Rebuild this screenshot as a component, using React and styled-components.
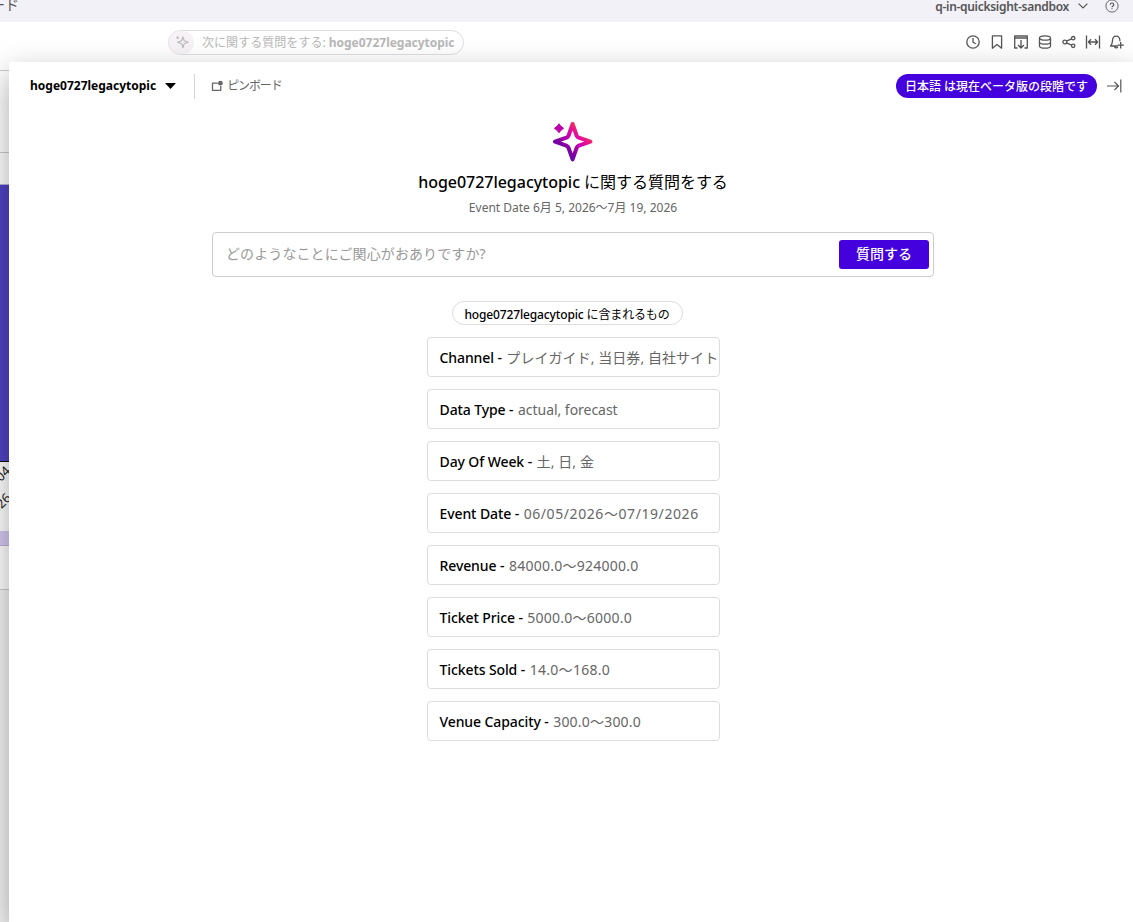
import styled, { createGlobalStyle } from "styled-components";

const GlobalStyle = createGlobalStyle`
  * {
    box-sizing: border-box;
  }

  body {
    margin: 0;
    overflow: hidden;
    font-family: "Noto Sans", "Noto Sans CJK JP", sans-serif;
    font-size: 12px;
    color: #000;
  }
`;

const Page = styled.div`
  position: relative;
  display: flex;
  flex-direction: column;
  height: 922px;
  overflow: hidden;
  background: #fff;
`;

const NavBar = styled.header`
  position: relative;
  z-index: 3;
  display: flex;
  flex: none;
  justify-content: space-between;
  height: 22px;
  padding-right: 14px;
  background: #f2f1f7;
  color: #545b64;
`;

const Crumb = styled.span`
  margin: -6px 0 0 -9px;
  font-size: 14px;
  line-height: 22px;
  color: #555;
`;

const Account = styled.div`
  display: flex;
  align-items: center;
  height: 12px;
  font-weight: 600;
  letter-spacing: -0.3px;
  color: #555;

  svg {
    margin-left: 9px;
  }

  svg + svg {
    margin-left: 17px;
  }
`;

const Toolbar = styled.div`
  display: flex;
  flex: none;
  align-items: center;
  justify-content: space-between;
  height: 40px;
  padding: 0 8px 0 168px;
`;

const AskPill = styled.div`
  display: flex;
  align-items: center;
  width: 296px;
  height: 25px;
  border: 1px solid #dedede;
  border-radius: 13px;
  color: #b8b8b8;
  letter-spacing: 0.05px;

  b {
    margin-left: 3px;
    font-weight: 700;
    letter-spacing: -0.02px;
  }
`;

const AskIcon = styled.span`
  display: flex;
  align-items: center;
  justify-content: center;
  width: 25px;
  height: 23px;
  margin-right: 8px;
  border-radius: 12px;
  background: #f6f2f6;
`;

const Tools = styled.div`
  display: flex;
  gap: 8px;
  color: #555;
`;

const Sheet = styled.div`
  display: flex;
  flex: 1;
  flex-direction: column;
  background: #f4f4f4;
`;

const Band = styled.div`
  flex: none;
  height: ${(p) => p.$h}px;
  border-bottom: 1px solid ${(p) => p.$line || "transparent"};
  background: ${(p) => p.$bg || "#fff"};
`;

const Ticks = styled(Band)`
  position: relative;
`;

const Tick = styled.span`
  position: absolute;
  right: ${(p) => p.$right}px;
  top: ${(p) => p.$top}px;
  font-size: 13px;
  line-height: 13px;
  color: #222;
  transform: rotate(-45deg);
  transform-origin: right center;
`;

const ChartColumn = styled.div`
  display: flex;
  flex-direction: column;
  width: 40px;
`;

const Panel = styled.main`
  position: absolute;
  z-index: 2;
  top: 62px;
  left: 9px;
  right: 0;
  bottom: 0;
  display: flex;
  flex-direction: column;
  background: #fff;
  box-shadow: 0 12px 30px rgba(0, 0, 0, 0.35);
`;

const PanelHeader = styled.div`
  display: flex;
  align-items: center;
  height: 48px;
  padding: 0 11px 0 21px;
`;

const TopicName = styled.div`
  display: flex;
  align-items: center;
  gap: 9px;
  padding-right: 18px;
  font-weight: 700;
  line-height: 16px;
`;

const Divider = styled.div`
  width: 1px;
  height: 25px;
  background: #d5d5d5;
`;

const Pinboard = styled.div`
  display: flex;
  flex: 1;
  align-items: center;
  gap: 4px;
  padding-left: 16px;
  font-size: 12px;
  line-height: 16px;
  letter-spacing: -1.1px;
  color: #666;
`;

const Beta = styled.div`
  height: 24px;
  margin-right: 10px;
  padding: 0 9px;
  border-radius: 12px;
  background: #4400dd;
  color: #fff;
  font-weight: 500;
  line-height: 25px;
  white-space: nowrap;
`;

const Content = styled.div`
  display: flex;
  flex-direction: column;
  align-items: center;
  padding: 12px 0 0 4px;
`;

const Title = styled.h1`
  margin: 8px 0 0;
  font-size: 16px;
  font-weight: 500;
  line-height: 24px;
  letter-spacing: -0.03px;
`;

const Regular = styled.span`
  font-weight: 400;
`;

const DateRange = styled.div`
  margin-top: 5px;
  line-height: 18px;
  color: #666;
`;

const Question = styled.div`
  display: flex;
  align-items: center;
  justify-content: space-between;
  width: 722px;
  height: 45px;
  margin-top: 15px;
  padding: 0 4px 0 13px;
  border: 1px solid #ccc;
  border-radius: 4px;
  font-size: 14px;
  letter-spacing: 0.1px;
  color: #999;
`;

const Placeholder = styled.span`
  margin-bottom: 3px;
`;

const AskButton = styled.button`
  width: 90px;
  height: 29px;
  padding: 0 0 4px;
  border: 0;
  border-radius: 3px;
  background: #4400dd;
  color: #fff;
  font: inherit;
  font-weight: 500;
`;

const Chip = styled.div`
  width: 231px;
  height: 24px;
  margin: 24px 12px 0 0;
  border: 1px solid #ddd;
  border-radius: 12px;
  font-weight: 500;
  line-height: 25px;
  letter-spacing: -0.14px;
  text-align: center;
`;

const FieldList = styled.div`
  display: grid;
  gap: 12px;
  width: 293px;
  margin-top: 12px;
`;

const Field = styled.div`
  height: 40px;
  padding: 0 0 0 12px;
  border: 1px solid #ddd;
  border-radius: 4px;
  overflow: hidden;
  color: #666;
  font-size: 14px;
  line-height: 40px;
  letter-spacing: ${(p) => p.$spacing || 0}px;
  white-space: nowrap;

  b {
    margin-right: 1px;
    color: #000;
    font-weight: 500;
    letter-spacing: -0.1px;
  }
`;

const fields = [
  { name: "Channel", values: "プレイガイド, 当日券, 自社サイト", spacing: 0.06 },
  { name: "Data Type", values: "actual, forecast", spacing: -0.04 },
  { name: "Day Of Week", values: "土, 日, 金", spacing: 0.1 },
  { name: "Event Date", values: "06/05/2026〜07/19/2026", spacing: 0.58 },
  { name: "Revenue", values: "84000.0〜924000.0", spacing: 0.25 },
  { name: "Ticket Price", values: "5000.0〜6000.0", spacing: 0.24 },
  { name: "Tickets Sold", values: "14.0〜168.0", spacing: 0.28 },
  { name: "Venue Capacity", values: "300.0〜300.0", spacing: 0.2 },
];

function Icon({ size = 16, children }) {
  return (
    <svg
      width={size}
      height={size}
      viewBox="0 0 16 16"
      fill="none"
      stroke="currentColor"
      strokeWidth="1.3"
      strokeLinejoin="round"
    >
      {children}
    </svg>
  );
}

function Sparkle() {
  return (
    <svg width="40" height="40" viewBox="0 0 40 40">
      <defs>
        <linearGradient id="spark" gradientUnits="userSpaceOnUse" x1="8" y1="35" x2="32" y2="8">
          <stop offset="0" stopColor="#5b12b8" />
          <stop offset="0.28" stopColor="#7c00a0" />
          <stop offset="0.65" stopColor="#dc00b4" />
          <stop offset="1" stopColor="#f83a4c" />
        </linearGradient>
      </defs>
      <path
        d="M19.6 2 L23.6 13.5 Q24.2 15 25.8 15.7 L37.4 19.6 L25.8 23.7 Q24.2 24.4 23.6 26 L19.6 37.4 L15.6 26 Q15 24.4 13.4 23.7 L2 19.6 L13.4 15.7 Q15 15 15.6 13.5 Z"
        fill="none"
        stroke="url(#spark)"
        strokeWidth="4"
        strokeLinejoin="round"
      />
      <path d="M6 1.8 L7.9 4.3 L10.6 6.3 L7.9 8.3 L6 10.8 L4.1 8.3 L1.4 6.3 L4.1 4.3 Z" fill="#bb00aa" stroke="#bb00aa" strokeLinejoin="round" />
    </svg>
  );
}

function App() {
  return (
    <Page>
      <GlobalStyle />
      <NavBar>
        <Crumb>ード</Crumb>
        <Account>
          q-in-quicksight-sandbox
          <svg width="10" height="6" viewBox="0 0 10 6" fill="none" stroke="currentColor" strokeWidth="1.2">
            <path d="M.6 .6 5 5 9.4 .6" />
          </svg>
          <Icon size={14}>
            <circle cx="8" cy="8" r="7" strokeWidth="1" />
            <path d="M6 6.5c0-2.6 4-2.6 4 0 0 1.5-2 1.4-2 3M8 10.5v1.3" />
          </Icon>
        </Account>
      </NavBar>

      <Toolbar>
        <AskPill>
          <AskIcon>
            <Icon size={14}>
              <path d="M9 2.2 10.5 6.5 15 8.2 10.5 9.9 9 14.4 7.5 9.9 3 8.2 7.5 6.5Z" />
              <path d="M3 1.2 4.6 3 3 4.8 1.4 3Z" fill="currentColor" stroke="none" />
            </Icon>
          </AskIcon>
          次に関する質問をする:<b>hoge0727legacytopic</b>
        </AskPill>
        <Tools>
          <Icon>
            <circle cx="8" cy="8" r="6.2" />
            <path d="M8 4v4.3l2.8 1.5" />
          </Icon>
          <Icon>
            <path d="M3.4 1.8h9.2v12.4L8 10.6l-4.6 3.6Z" />
          </Icon>
          <Icon>
            <path d="M4.5 14H1.7V2h12.6v12h-2.8M1.7 4h12.6M8 6v8M5 11l3 3 3-3" />
          </Icon>
          <Icon>
            <ellipse cx="8" cy="4" rx="5.5" ry="2.2" />
            <path d="M2.5 4v8c0 2.9 11 2.9 11 0V4M2.5 8c0 2.9 11 2.9 11 0" />
          </Icon>
          <Icon>
            <circle cx="3.8" cy="8" r="1.9" />
            <circle cx="12.2" cy="4.2" r="1.7" />
            <circle cx="12.2" cy="11.8" r="1.7" />
            <path d="m5.5 7.2 5.2-2.3M5.5 8.8l5.2 2.3" />
          </Icon>
          <Icon>
            <path d="M1.5 1.5v13M14.5 1.5v13M3.5 8h9M6 5.2 3.4 8 6 10.8M10 5.2 12.6 8 10 10.8" />
          </Icon>
          <Icon>
            <path d="M8.5 12H1.6c1.2-1.4 1.7-2.7 1.8-4.8C3.6.4 10.8.4 11 7.2M5.5 12.2c0 2.2 3.2 2.2 3.2.2M11.7 8v6.4M8.6 11.2h6.3" />
          </Icon>
        </Tools>
      </Toolbar>

      <Sheet>
        <ChartColumn>
          <Band $h={9} $line="#ccc" />
          <Band $h={82} $line="#ccc" />
          <Band $h={32} $line="#b9b2dc" />
          <Band $h={277} $bg="#5043c4" $line="#111" />
          <Ticks $h={69}>
            <Tick $right={32} $top={0}>2026/06/04</Tick>
            <Tick $right={31} $top={27}>2026</Tick>
          </Ticks>
          <Band $h={15} $bg="#d6c8f2" $line="#bbb0d4" />
          <Band $h={44} $line="#ccc" />
        </ChartColumn>
      </Sheet>

      <Panel>
        <PanelHeader>
          <TopicName>
            hoge0727legacytopic
            <svg width="11" height="6" viewBox="0 0 11 6">
              <path d="M0 0h11L5.5 6Z" />
            </svg>
          </TopicName>
          <Divider />
          <Pinboard>
            <Icon size={12}>
              <path d="M9 4.2H2v9.6h11V8" strokeWidth="1.7" />
              <circle cx="12.5" cy="4.2" r="3.2" fill="currentColor" stroke="none" />
            </Icon>
            ピンボード
          </Pinboard>
          <Beta>日本語 は現在ベータ版の段階です</Beta>
          <svg width="15" height="14" viewBox="0 0 15 14" fill="none" stroke="#555" strokeWidth="1.2">
            <path d="M0 7h11.5M7.5 3l4 4-4 4M13.8.5v13" />
          </svg>
        </PanelHeader>

        <Content>
          <Sparkle />
          <Title>
            hoge0727legacytopic <Regular>に関する質問をする</Regular>
          </Title>
          <DateRange>Event Date 6月 5, 2026〜7月 19, 2026</DateRange>
          <Question>
            <Placeholder>どのようなことにご関心がおありですか?</Placeholder>
            <AskButton>質問する</AskButton>
          </Question>
          <Chip>
            hoge0727legacytopic <Regular>に含まれるもの</Regular>
          </Chip>
          <FieldList>
            {fields.map((field) => (
              <Field key={field.name} $spacing={field.spacing}>
                <b>{field.name} - </b>
                {field.values}
              </Field>
            ))}
          </FieldList>
        </Content>
      </Panel>
    </Page>
  );
}

export default App;
